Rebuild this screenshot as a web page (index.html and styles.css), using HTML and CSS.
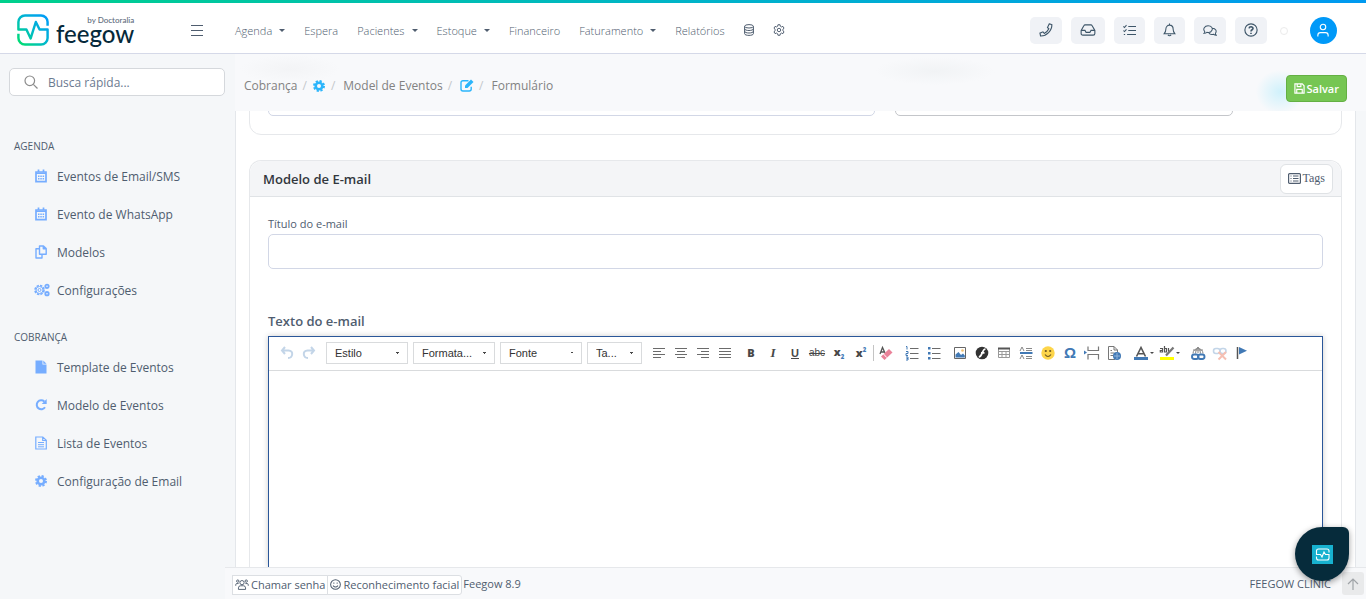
FILE: index.html
```html
<!DOCTYPE html>
<html lang="pt-BR">
<head>
  <meta charset="UTF-8" />
  <meta name="viewport" content="width=device-width, initial-scale=1.0"/>
  <title>Feegow - Formulário</title>
  <link rel="stylesheet" href="styles.css">
</head>
<body>
  <header class="header">
    <a href="#" class="logo">
      <svg class="logo-mark" viewBox="0 0 34 34" width="32" height="32">
        <defs>
          <linearGradient id="logoGrad" x1="0" y1="1" x2="1" y2="0">
            <stop offset="0" stop-color="#00e06c"/>
            <stop offset="0.5" stop-color="#00b8cc"/>
            <stop offset="1" stop-color="#0099fb"/>
          </linearGradient>
        </defs>
        <path d="M32.500 12.500V8.500a7 7 0 0 0-7-7h-17a7 7 0 0 0-7 7v8h8.500l4.500 9.500 5.500-17.500 4 8h8.500v9a7 7 0 0 1-7 7h-17a7 7 0 0 1-7-7V21" fill="none" stroke="url(#logoGrad)" stroke-width="2.600" stroke-linejoin="round"/>
      </svg>
      <span class="logo-text">
        <small>by Doctoralia</small>
        <span>feegow</span>
      </span>
    </a>
    <button type="button" class="menu-toggle" aria-label="Menu">
      <svg viewBox="0 0 12 11" width="12" height="11"><path d="M0 .5h12M0 5.500h12M0 10.500h12" stroke="#4f5d6f" stroke-width="1.200"/></svg>
    </button>
    <nav class="nav">
      <button type="button" class="has-caret">Agenda</button>
      <a href="#">Espera</a>
      <button type="button" class="has-caret">Pacientes</button>
      <button type="button" class="has-caret">Estoque</button>
      <a href="#">Financeiro</a>
      <button type="button" class="has-caret">Faturamento</button>
      <a href="#">Relatórios</a>
      <a href="#" aria-label="Dados">
        <svg viewBox="0 0 10 12" width="10" height="12" fill="none" stroke="#4f5d6f"><ellipse cx="5" cy="2.300" rx="4.400" ry="1.700"/><path d="M.6 2.300v7.400c0 1 2 1.700 4.400 1.700s4.400-.7 4.400-1.700V2.300M.6 4.800c0 1 2 1.700 4.400 1.700s4.400-.7 4.400-1.700M.6 7.300C.6 8.300 2.600 9 5 9s4.400-.7 4.400-1.700"/></svg>
      </a>
      <a href="#" aria-label="Configurações">
        <svg viewBox="0 0 16 16" width="12" height="12" fill="none" stroke="#4f5d6f" stroke-width="1.300"><path d="M6.600 1h2.800l.4 2 1.500.9 2-.7 1.400 2.400L13.200 7v2l1.500 1.400-1.400 2.400-2-.7-1.500.9-.4 2H6.600l-.4-2-1.500-.9-2 .7-1.400-2.400L2.800 9V7L1.300 5.600l1.400-2.400 2 .7L6.200 3z"/><circle cx="8" cy="8" r="2.300"/></svg>
      </a>
    </nav>
    <div class="header-actions">
      <button type="button" aria-label="Telefone">
        <svg viewBox="0 0 16 16" width="14" height="14"><path d="M11.700 1l3 .8c.2 7-5.900 13.200-12.900 13l-.7-3.200 3.400-1.500 1.500 1.800c2.300-1.100 4.200-3 5.300-5.300L9.700 5.200z"/></svg>
      </button>
      <button type="button" aria-label="Caixa de entrada">
        <svg viewBox="0 0 18 14" width="16" height="12"><path d="M1 7.500L4.300 1.800Q4.700 1 5.600 1h6.800q.9 0 1.300.8L17 7.500V11q0 2-2 2H3q-2 0-2-2zM1.200 7.500h4.300l1.300 2.300h4.400l1.300-2.300h4.300"/></svg>
      </button>
      <button type="button" aria-label="Tarefas">
        <svg viewBox="0 0 16 16" width="13" height="13"><path d="M6.500 3H16M6.500 8H16M5 13h11M.5 3l1.300 1.300L4.300 1.500M.5 8l1.300 1.300L4.300 6.500M1 13h1.600"/></svg>
      </button>
      <button type="button" aria-label="Notificações">
        <svg viewBox="0 0 16 16" width="13" height="14"><path d="M8 0v2M1.500 12.500c1.300-1.500 2-2.500 2-5.500C3.500 4 5.500 2 8 2s4.500 2 4.500 5c0 3 .7 4 2 5.500zM6 14q2 2.300 4 0"/></svg>
      </button>
      <button type="button" aria-label="Mensagens">
        <svg viewBox="0 0 18 16" width="14" height="13"><path d="M1.500 11.500c1-.8 1-1.500.6-2.300C-.5 6 2 2 6.500 2s6.300 3 5 5.700C10.500 10 7.500 11 5 10.300c-1 .8-2.200 1.300-3.500 1.200zM12 5c4.500 0 6 4 4 6.500 0 1 .3 1.800 1 2.500-1.500 0-2.500-.5-3.500-1.200-2.500.7-5 .1-6-2"/></svg>
      </button>
      <button type="button" aria-label="Ajuda">
        <svg viewBox="0 0 16 16" width="14" height="14"><circle cx="8" cy="8" r="7"/><path d="M5.800 6.200C6 3.700 10.400 3.800 10.300 6.300 10.200 7.800 8 7.700 8 9.600M8 11v1.600" stroke-width="1.800"/></svg>
      </button>
      <span class="status-dot"></span>
      <button type="button" class="avatar" aria-label="Usuário">
        <svg viewBox="0 0 14 16" width="12" height="14"><circle cx="7" cy="4.500" r="3.200"/><path d="M1 15.500v-1.500q0-3 3-3h6q3 0 3 3v1.500"/></svg>
      </button>
    </div>
  </header>

  <div class="layout">
    <aside class="sidebar">
      <label class="search">
        <svg viewBox="0 0 14 14" width="14" height="14" fill="none" stroke="#8c8c8c" stroke-width="1.200"><circle cx="5.800" cy="5.800" r="4.800"/><path d="M9.300 9.300l4.200 4.200"/></svg>
        <input type="text" placeholder="Busca rápida..." aria-label="Busca rápida">
      </label>

      <h6>Agenda</h6>
      <ul>
        <li><a href="#"><svg viewBox="0 0 14 14"><path fill="none" stroke="currentColor" stroke-width="1.700" d="M2 3h10v9.700H2zM4.500.5v2.300M9.500.5v2.300"/><path stroke="currentColor" stroke-width="1.500" d="M2 4.200h10M4 7.200h1.500M6.300 7.200h1.500M8.600 7.200h1.500M4 9.700h1.500M6.300 9.700h1.500M8.600 9.700h1.500"/></svg>Eventos de Email/SMS</a></li>
        <li><a href="#"><svg viewBox="0 0 14 14"><path fill="none" stroke="currentColor" stroke-width="1.700" d="M2 3h10v9.700H2zM4.500.5v2.300M9.500.5v2.300"/><path stroke="currentColor" stroke-width="1.500" d="M2 4.200h10M4 7.200h1.500M6.300 7.200h1.500M8.600 7.200h1.500M4 9.700h1.500M6.300 9.700h1.500M8.600 9.700h1.500"/></svg>Evento de WhatsApp</a></li>
        <li><a href="#"><svg viewBox="0 0 14 14" fill="none" stroke="currentColor" stroke-width="1.400" stroke-linejoin="round"><path d="M5.500 1h4l2.700 2.500V9.300H5.500zM9.300 1v2.700H12M5.300 3.800H2V13h6V9.500"/></svg>Modelos</a></li>
        <li><a href="#"><svg class="wide" viewBox="0 0 16 14" fill="none" stroke="currentColor"><circle cx="5.500" cy="7" r="4.500" stroke-width="1.600" stroke-dasharray="2.400 1.130"/><circle cx="5.500" cy="7" r="3.500"/><circle cx="5.500" cy="7" r="1.500"/><circle cx="13" cy="3.300" r="1.700" stroke-width="1.800"/><circle cx="13" cy="10.700" r="1.700" stroke-width="1.800"/></svg>Configurações</a></li>
      </ul>

      <h6>Cobrança</h6>
      <ul>
        <li><a href="#"><svg viewBox="0 0 14 14" fill="currentColor"><path d="M1.500.5h7v4h4v9h-11zM9.300.5l3.200 3.200H9.300z"/></svg>Template de Eventos</a></li>
        <li><a href="#"><svg viewBox="0 0 14 14"><path d="M11 9.300A4.500 4.500 0 1 1 10.300 3.500" fill="none" stroke="currentColor" stroke-width="2"/><path d="M12.700 1v5h-5z" fill="currentColor"/></svg>Modelo de Eventos</a></li>
        <li><a href="#"><svg viewBox="0 0 14 14" fill="none" stroke="currentColor"><path d="M1.800 1h7l3.500 3.300V13H1.800zM8.700 1v3.500h3.500" stroke-width="1.200"/><path d="M4 6.500h6M4 8.700h6M4 10.800h6"/></svg>Lista de Eventos</a></li>
        <li><a href="#"><svg viewBox="0 0 14 14" fill="none" stroke="currentColor"><circle cx="7" cy="7" r="3.300" stroke-width="2.600"/><circle cx="7" cy="7" r="5" stroke-width="2" stroke-dasharray="2.200 1.727"/></svg>Configuração de Email</a></li>
      </ul>
    </aside>

    <main class="main">
      <div class="topbar">
        <nav class="breadcrumb" aria-label="Navegação">
          <a href="#">Cobrança</a>
          <span class="sep">/</span>
          <svg viewBox="0 0 14 14" width="14" height="14" fill="none" stroke="#2bb5fb"><circle cx="7" cy="7" r="3.300" stroke-width="2.600"/><circle cx="7" cy="7" r="5" stroke-width="2" stroke-dasharray="2.200 1.727"/></svg>
          <span class="sep">/</span>
          <a href="#" class="crumb">Model de Eventos</a>
          <span class="sep">/</span>
          <svg class="crumb-edit" viewBox="0 0 14 13" width="14" height="13"><path d="M8.500 1.800H3Q1 1.800 1 3.800V10q0 2 2 2h6.200q2 0 2-2V7.800" fill="none" stroke="#2bb5fb" stroke-width="1.400"/><path d="M5 6.500L11 .500l2.500 2.500-6 6H5z" fill="#2bb5fb"/></svg>
          <span class="sep">/</span>
          <span class="crumb">Formulário</span>
        </nav>
        <button type="submit" form="eventForm" class="btn-save">
          <svg viewBox="0 0 12 12" width="11" height="11" fill="none" stroke="#fff" stroke-width="1.300"><path d="M1 1h8l2 2v8H1zM3.500 1v3h4V1M3 11V7h6v4"/></svg>
          Salvar
        </button>
      </div>

      <form id="eventForm" class="page">
        <section class="card card-first">
          <div class="field-row">
            <input type="text" class="input" aria-label="Descrição">
            <input type="text" class="input input-dark" aria-label="Tipo">
          </div>
        </section>

        <section class="card card-email">
          <div class="card-head">
            <h5>Modelo de E-mail</h5>
            <button type="button" class="btn-tags">
              <svg viewBox="0 0 13 11" width="13" height="11" fill="none" stroke="#4f5d6f"><rect x=".6" y=".6" width="11.800" height="9.800" rx="1" stroke-width="1.200"/><path d="M2.500 3h1M5 3h5.500M2.500 5.500h1M5 5.500h5.500M2.500 8h1M5 8h5.500"/></svg>
              Tags
            </button>
          </div>
          <div class="card-body">
            <label for="emailTitle" class="label">Título do e-mail</label>
            <input type="text" id="emailTitle" class="input">

            <label for="emailText" class="label label-lg">Texto do e-mail</label>
            <div class="editor">
              <div class="toolbar">
                <div class="group">
                  <button type="button" aria-label="Desfazer"><svg viewBox="0 0 16 16" fill="none" stroke="#c3d5e8" stroke-width="2"><path d="M6 2L3 5.500 6 9M3 5.500h6.500c5.500 0 4.500 7.500-.5 7.500"/></svg></button>
                  <button type="button" aria-label="Refazer"><svg viewBox="0 0 16 16" fill="none" stroke="#c3d5e8" stroke-width="2"><path d="M10 2l3 3.500L10 9M13 5.500H6.500C1 5.500 2 13 7 13"/></svg></button>
                </div>
                <div class="group combos">
                  <select aria-label="Estilo"><option>Estilo</option></select>
                  <select aria-label="Formatação"><option>Formata...</option></select>
                  <select aria-label="Fonte"><option>Fonte</option></select>
                  <select aria-label="Tamanho" class="small"><option>Ta...</option></select>
                </div>
                <div class="group">
                  <button type="button" aria-label="Alinhar à esquerda"><svg viewBox="0 0 16 16" stroke="#6b6b6b"><path d="M2 3.500h12M2 6.500h8M2 9.500h12M2 12.500h8"/></svg></button>
                  <button type="button" aria-label="Centralizar"><svg viewBox="0 0 16 16" stroke="#6b6b6b"><path d="M2 3.500h12M4 6.500h8M2 9.500h12M4 12.500h8"/></svg></button>
                  <button type="button" aria-label="Alinhar à direita"><svg viewBox="0 0 16 16" stroke="#6b6b6b"><path d="M2 3.500h12M6 6.500h8M2 9.500h12M6 12.500h8"/></svg></button>
                  <button type="button" aria-label="Justificar"><svg viewBox="0 0 16 16" stroke="#6b6b6b"><path d="M2 3.500h12M2 6.500h12M2 9.500h12M2 12.500h12"/></svg></button>
                </div>
                <div class="group">
                  <button type="button"><b>B</b></button>
                  <button type="button"><i>I</i></button>
                  <button type="button"><u>U</u></button>
                  <button type="button"><s>abc</s></button>
                  <button type="button"><b>x<sub>2</sub></b></button>
                  <button type="button"><b>x<sup>2</sup></b></button>
                  <span class="divider"></span>
                  <button type="button" aria-label="Remover formatação"><svg viewBox="0 0 16 16"><path d="M2 9L4.500 2.500 7 8M3 7h3" fill="none" stroke="#555" stroke-width="1.300"/><path d="M3 11.500l8-7.500 3.500 3.500-8 7.500z" fill="#ea8299"/><path d="M5.500 9l3.300 3.600" stroke="#fff"/></svg></button>
                </div>
                <div class="group">
                  <button type="button" aria-label="Lista numerada"><svg viewBox="0 0 16 16" fill="none"><path d="M6 3.500h8.500M6 8.500h8.500M6 13.500h8.500" stroke="#6b6b6b"/><path d="M2 1.500h1v3M2 6.500h2v2H2v2h2M2 12h2v3H2M2.500 13.500H4" stroke="#4179b5"/></svg></button>
                  <button type="button" aria-label="Lista com marcadores"><svg viewBox="0 0 16 16"><path d="M6 3.500h8.500M6 8.500h8.500M6 13.500h8.500" stroke="#6b6b6b"/><path d="M2 2h2.500v2.500H2zM2 7h2.500v2.500H2zM2 12h2.500v2.500H2z" fill="#4179b5"/></svg></button>
                </div>
                <div class="group">
                  <button type="button" aria-label="Imagem"><svg viewBox="0 0 16 16"><path d="M2.500 2.500h11v11h-11z" fill="#fff" stroke="#666"/><path d="M3.500 12.500V9.500l3-2.500 2.500 3 2-1.500 1.800 2v2z" fill="#4179b5"/><circle cx="10.500" cy="5.500" r="1.300" fill="#f0c070"/></svg></button>
                  <button type="button" aria-label="Flash"><svg viewBox="0 0 16 16"><circle cx="8" cy="8" r="6.300" fill="#333"/><path d="M11.500 4C8 4 8.500 11.500 4.800 12M7 7.800h3.500" fill="none" stroke="#fff" stroke-width="1.700"/></svg></button>
                  <button type="button" aria-label="Tabela"><svg viewBox="0 0 16 16" fill="none" stroke="#999"><path d="M2.500 3.500h11v9h-11zM2.500 6.500h11M2.500 9.500h11M6 6v6.500M10 6v6.500"/><path d="M2 3.500h12" stroke="#555" stroke-width="2"/></svg></button>
                  <button type="button" aria-label="Linha horizontal"><svg viewBox="0 0 16 16" fill="none"><path d="M2 8h12.500" stroke="#4179b5" stroke-width="2"/><path d="M2 6l2-4 2 4M2 14l2-4 2 4M8 3.500h6M8 5.500h6M8 11.500h6M8 13.500h6" stroke="#888"/></svg></button>
                  <button type="button" aria-label="Emoticon"><svg viewBox="0 0 16 16"><circle cx="8" cy="8" r="6.700" fill="#fdd54a"/><path d="M5 9.500q3 4 6 0" fill="none" stroke="#6b5520" stroke-width="1.200"/><circle cx="5.800" cy="6" r="1.100" fill="#6b5520"/><circle cx="10.200" cy="6" r="1.100" fill="#6b5520"/></svg></button>
                  <button type="button" class="omega">Ω</button>
                  <button type="button" aria-label="Quebra de página"><svg viewBox="0 0 16 16" fill="none" stroke="#777" stroke-width="1.200"><path d="M4 1.500v4h10.500v-4M4 14.500V9.500h10.500v5"/><path d="M0 5.500l3 2-3 2z" fill="#4179b5" stroke="none"/></svg></button>
                  <button type="button" aria-label="Modelo"><svg viewBox="0 0 16 16" fill="none" stroke="#777"><path d="M9 14.500H2.500v-13H8L11.500 5v2M8 1.500V5h3.500M4.500 5.500H6M4.500 8h4M4.500 10.500h3"/><circle cx="11" cy="11" r="4" fill="#4179b5" stroke="none"/><path d="M8 11h6M11 8v6" stroke="#8fb3da"/></svg></button>
                </div>
                <div class="group colors">
                  <button type="button" aria-label="Cor do texto"><svg viewBox="0 0 16 16"><path d="M3.500 11.500L8 2.500l4.500 9M5 8.800h6" fill="none" stroke="#555" stroke-width="1.600"/><path d="M1 12h14v3H1z" fill="#4179b5"/></svg></button>
                  <button type="button" aria-label="Cor do fundo"><svg viewBox="0 0 16 16"><path d="M1 3.500h2.500V7H1.300V5.500h2M5.500 1v6h2V3.500h-2M9.500 3v3l1 1" fill="none" stroke="#555" stroke-width="1.200"/><path d="M14.500 2.500L7 10.500" stroke="#777" stroke-width="2.200"/><path d="M1 12h14v3H1z" fill="#ff0"/></svg></button>
                </div>
                <div class="group">
                  <button type="button" aria-label="Inserir link"><svg viewBox="0 0 16 16" fill="none"><path d="M3 8.500a5 5 0 1 1 10 0M8 2v6M3 5h10M5.500 8.500q0-4 2.500-6.500 2.500 2.500 2.500 6.500" stroke="#888"/><rect x="2" y="9.500" width="6.500" height="4.500" rx="2.200" stroke="#4179b5" stroke-width="1.900"/><rect x="8" y="9.500" width="6.500" height="4.500" rx="2.200" stroke="#4179b5" stroke-width="1.900"/></svg></button>
                  <button type="button" aria-label="Remover link"><svg viewBox="0 0 16 16" fill="none"><rect x="1.500" y="3.500" width="6.500" height="5" rx="2.400" stroke="#c3d5e8" stroke-width="1.600"/><rect x="8" y="3.500" width="6" height="5" rx="2.400" stroke="#c3d5e8" stroke-width="1.600"/><path d="M6.500 7l7.500 7.500M14 7l-7.500 7.500" stroke="#f6bfb2" stroke-width="2"/></svg></button>
                  <button type="button" aria-label="Âncora"><svg viewBox="0 0 16 16"><path d="M3.500 2v12" stroke="#555" stroke-width="1.500"/><path d="M5 2l8 3.800L5 9.500z" fill="#4179b5"/></svg></button>
                </div>
              </div>
              <textarea id="emailText"></textarea>
            </div>
          </div>
        </section>
      </form>

      <footer class="footer">
        <div class="btn-group">
          <button type="button"><svg viewBox="0 0 16 13" width="14" height="11" fill="none" stroke="#4f5d6f" stroke-width="1.100"><circle cx="8" cy="4.300" r="2.500"/><path d="M3.800 12.300V10.500q0-2.500 2.500-2.500h3.400q2.500 0 2.500 2.500v1.800zM.6 8V6.700Q.6 5.400 2 5.400h2M15.400 8V6.700q0-1.300-1.400-1.300h-2"/><circle cx="3" cy="2.500" r="1.400"/><circle cx="13" cy="2.500" r="1.400"/></svg>Chamar senha</button>
          <button type="button"><svg viewBox="0 0 12 12" width="11" height="11" fill="none" stroke="#4f5d6f" stroke-width="1.100"><circle cx="6" cy="6" r="5.300"/><path d="M3.300 7.200q2.700 3 5.400 0M4.200 3.800v1.400M7.800 3.800v1.400"/></svg>Reconhecimento facial</button>
        </div>
        <span class="version">Feegow 8.9</span>
        <span class="clinic">FEEGOW CLINIC</span>
        <button type="button" class="to-top" aria-label="Voltar ao topo">
          <svg viewBox="0 0 12 12" width="12" height="12" fill="none" stroke="#a0a4a8" stroke-width="1.200"><path d="M6 12V1M1 6l5-5 5 5"/></svg>
        </button>
      </footer>
    </main>
  </div>

  <button type="button" class="chat" aria-label="Chat">
    <svg viewBox="0 0 21 19" width="21" height="19"><path fill="#17b1cf" d="M0 0h21v19H0z"/><path d="M17 7.500V6q0-2-2-2H6.500q-2 0-2 2v3.500h4L10 12l2-5 1.500 2.500H17V13q0 2-2 2H6.500q-2 0-2-2v-1.500" fill="none" stroke="#fff" stroke-width="1.100"/></svg>
  </button>
</body>
</html>
```

FILE: styles.css
```css
*, *::before, *::after {
  box-sizing: border-box;
}

body {
  margin: 0;
  height: 100vh;
  display: flex;
  flex-direction: column;
  overflow: hidden;
  font-family: "Open Sans", "Noto Sans", sans-serif;
  font-size: 12px;
  color: #4f5d6f;
  background: #f5f7f9;
}

a {
  color: inherit;
  text-decoration: none;
}

button {
  font-family: inherit;
  font-size: inherit;
  color: inherit;
  padding: 0;
  border: none;
  background: none;
  cursor: pointer;
}

svg {
  display: block;
  flex: none;
}

/* header */
.header {
  flex: none;
  height: 54px;
  display: flex;
  align-items: center;
  padding: 7px 29px 0 17px;
  background: linear-gradient(90deg, #00d08c, #00b4c8 50%, #0099f0) top / 100% 3px no-repeat #fff;
  border-bottom: 1px solid #d5d9e8;
}

.logo {
  display: flex;
  align-items: center;
  gap: 7px;
  width: 174px;
  color: #06293a;
}

.logo-text {
  display: flex;
  flex-direction: column;
  font-family: Lato, sans-serif;
  font-size: 24px;
  line-height: 20px;
  font-weight: 500;
}

.logo-text small {
  font-size: 8px;
  line-height: 8px;
  text-align: right;
  color: #5d6b7c;
}

.nav {
  display: flex;
  align-items: center;
  gap: 19px;
  margin-left: 32px;
  font-size: 11px;
  font-weight: 300;
}

.has-caret {
  display: flex;
  align-items: center;
  gap: 7px;
  font-weight: 300;
}

.has-caret::after {
  content: "";
  border: 3px solid transparent;
  border-top-color: #4f5d6f;
  border-bottom: none;
}

.header-actions {
  display: flex;
  align-items: center;
  gap: 9px;
  margin-left: auto;
}

.header-actions button {
  height: 27px;
  padding: 0 9px;
  border-radius: 5px;
  background: #f0f2f6;
}

.header-actions svg {
  fill: none;
  stroke: #3d5568;
  stroke-width: 1.3;
}

.status-dot {
  width: 8px;
  height: 8px;
  margin: 2px 13px 0 4px;
  border: 1px solid #ebebeb;
  border-radius: 50%;
}

.header-actions .avatar {
  width: 27px;
  padding: 0 7px;
  border-radius: 50%;
  background: #0099f8;
}

.avatar svg {
  stroke: #fff;
}

/* sidebar */
.layout {
  flex: 1;
  min-height: 0;
  display: flex;
}

.sidebar {
  flex: none;
  width: 236px;
  padding: 14px 10px 0 9px;
  border-right: 1px solid #e4e7eb;
}

.search {
  display: flex;
  align-items: center;
  gap: 10px;
  height: 28px;
  padding: 0 14px;
  margin-bottom: 42px;
  border: 1px solid #d5d8dc;
  border-radius: 5px;
  background: #fff;
}

.search input {
  width: 100%;
  border: none;
  outline: none;
  background: none;
  padding: 0;
  font: 12px "Open Sans", sans-serif;
}

.search input::placeholder {
  color: #6b7a90;
}

.sidebar h6 {
  margin: 0 0 3px 5px;
  font-size: 10px;
  line-height: 16px;
  font-weight: 400;
  text-transform: uppercase;
}

.sidebar ul {
  list-style: none;
  margin: 0 0 20px;
  padding: 0;
}

.sidebar li a {
  display: flex;
  align-items: center;
  gap: 9px;
  height: 38px;
  padding-left: 25px;
}

.sidebar li svg {
  width: 14px;
  height: 14px;
  color: #76adff;
}

.sidebar li .wide {
  width: 16px;
  margin-right: -2px;
}

/* content column */
.main {
  flex: 1;
  min-width: 0;
  display: flex;
  flex-direction: column;
}

.topbar {
  flex: none;
  height: 57px;
  display: flex;
  align-items: center;
  justify-content: space-between;
  padding: 6px 19px 0 9px;
  margin-left: -1px;
  background:
    radial-gradient(ellipse 24px 22px at 1045px 38px, #d0f1fb, transparent),
    radial-gradient(ellipse 50px 14px at 55px 15px, #f3f4f6, transparent),
    radial-gradient(ellipse 60px 14px at 700px 17px, #f1f3f5, transparent),
    #f8f9fb;
}

.breadcrumb {
  display: flex;
  align-items: center;
  gap: 5px;
  color: #828282;
}

.breadcrumb .sep {
  color: #c4c8cc;
}

.breadcrumb .crumb,
.breadcrumb .crumb-edit {
  margin-left: 3px;
}

.btn-save {
  display: flex;
  align-items: center;
  gap: 1px;
  height: 27px;
  padding: 0 7px;
  margin-top: 6px;
  border: 1px solid #64b043;
  border-radius: 4px;
  background: #76c653;
  color: #fff;
  font-size: 11px;
  font-weight: 600;
}

.page {
  flex: 1;
  min-height: 0;
  overflow: hidden;
  display: flex;
  flex-direction: column;
  margin-right: 10px;
  padding: 0 13px;
  border-right: 1px solid #e4e7eb;
  background: #fff;
}

.card {
  border: 1px solid #e6e8eb;
  border-radius: 12px;
}

.card-first {
  flex: none;
  margin: -32px 0 25px;
  padding: 1px 18px 18px;
}

.field-row {
  display: grid;
  grid-template-columns: 607fr 338fr 70px;
  gap: 20px;
}

.field-row .input {
  min-width: 0;
}

.card-email {
  flex: 1;
  min-height: 0;
  display: flex;
  flex-direction: column;
  border-bottom: none;
  border-radius: 12px 12px 0 0;
}

.card-head {
  display: flex;
  align-items: center;
  justify-content: space-between;
  height: 36px;
  padding: 0 8px 0 13px;
  border-bottom: 1px solid #e0e3e6;
  border-radius: 12px 12px 0 0;
  background: #f4f5f7;
}

.card-head h5 {
  margin: 0;
  font-size: 13px;
  font-weight: 600;
  color: #32373d;
}

.btn-tags {
  display: flex;
  align-items: center;
  gap: 2px;
  height: 30px;
  padding: 0 7px;
  border: 1px solid #dfe2e5;
  border-radius: 6px;
  background: #fff;
  font-family: "Liberation Serif", serif;
  font-size: 12px;
}

.card-body {
  flex: 1;
  min-height: 0;
  display: flex;
  flex-direction: column;
  padding: 17px 18px 0;
}

.label {
  font-size: 11px;
  line-height: 20px;
}

.label-lg {
  margin: 42px 0 5px;
  font-size: 13px;
  font-weight: 600;
}

.input {
  flex: none;
  width: 100%;
  height: 35px;
  padding: 0 10px;
  border: 1px solid #d2d7e6;
  border-radius: 5px;
  background: #fff;
}

.input-dark {
  border-color: #c4c6ca;
}

/* editor */
.editor {
  flex: 1;
  min-height: 0;
  display: flex;
  flex-direction: column;
  border: 1px solid #2a5699;
  border-bottom: none;
  box-shadow: 0 0 6px rgba(0, 0, 0, 0.2);
}

.toolbar {
  flex: none;
  display: flex;
  align-items: center;
  gap: 4px;
  height: 34px;
  padding: 0 0 2px 7px;
  border-bottom: 1px solid #d9dbdd;
  overflow: hidden;
}

.group {
  display: flex;
  align-items: center;
}

.group button {
  width: 22px;
  height: 22px;
  display: flex;
  align-items: center;
  justify-content: center;
  color: #484848;
  font: 11px "Liberation Sans", sans-serif;
}

.group button svg {
  width: 16px;
  height: 16px;
}

.group button b {
  font-family: "Open Sans", sans-serif;
  font-weight: 800;
}

.group button i {
  font-family: "Liberation Serif", serif;
  font-size: 13px;
  font-weight: 700;
}

.group button u {
  font-weight: 700;
}

.group button s {
  font-size: 10px;
}

.group sub,
.group sup {
  font-size: 6px;
  color: #4179b5;
}

.group .omega {
  color: #4179b5;
  font-size: 15px;
  font-weight: 700;
}

.divider {
  width: 1px;
  height: 16px;
  margin: 0 1px;
  background: #c4c4c4;
}

.combos {
  gap: 5px;
  margin: 0 2px;
}

.combos select {
  appearance: none;
  width: 82px;
  height: 22px;
  padding: 0 8px;
  border: 1px solid #d9dbdd;
  border-radius: 0;
  background:
    linear-gradient(135deg, #484848 50%, transparent 50%) right 7px center / 2px 2px no-repeat,
    linear-gradient(225deg, #484848 50%, transparent 50%) right 9px center / 2px 2px no-repeat,
    #fff;
  color: #333;
  font: 11px "Liberation Sans", sans-serif;
}

.combos .small {
  width: 55px;
}

.colors {
  margin: 0 1px;
}

.colors button {
  width: 26px;
  gap: 1px;
}

.colors button::after {
  content: "";
  border: 2px solid transparent;
  border-top-color: #484848;
  border-bottom: none;
}

.editor textarea {
  flex: 1;
  width: 100%;
  padding: 12px;
  border: none;
  outline: none;
  resize: none;
}

/* footer */
.footer {
  flex: none;
  display: flex;
  align-items: center;
  height: 32px;
  margin-left: -11px;
  padding: 0 2px 0 7px;
  border-top: 1px solid #e6e8eb;
  background: #f8f9fb;
  font-size: 11px;
}

.btn-group {
  display: flex;
  margin-top: 2px;
}

.btn-group button {
  display: flex;
  align-items: center;
  gap: 2px;
  height: 20px;
  padding: 0 2px;
  border: 1px solid #dcdfe3;
  background: #fff;
}

.btn-group button + button {
  margin-left: -1px;
  border-radius: 0 3px 3px 0;
}

.version {
  margin-left: 1px;
}

.clinic {
  margin-left: auto;
  margin-right: 11px;
}

.to-top {
  display: grid;
  place-items: center;
  width: 22px;
  height: 23px;
  border-radius: 3px;
  background: #e9eaeb;
}

.chat {
  position: absolute;
  right: 17px;
  bottom: 18px;
  display: grid;
  place-items: center;
  width: 54px;
  height: 54px;
  border-radius: 50% 6px 50% 50%;
  background: #062b3b;
  box-shadow: 0 2px 6px rgba(0, 0, 0, 0.4);
}
```
